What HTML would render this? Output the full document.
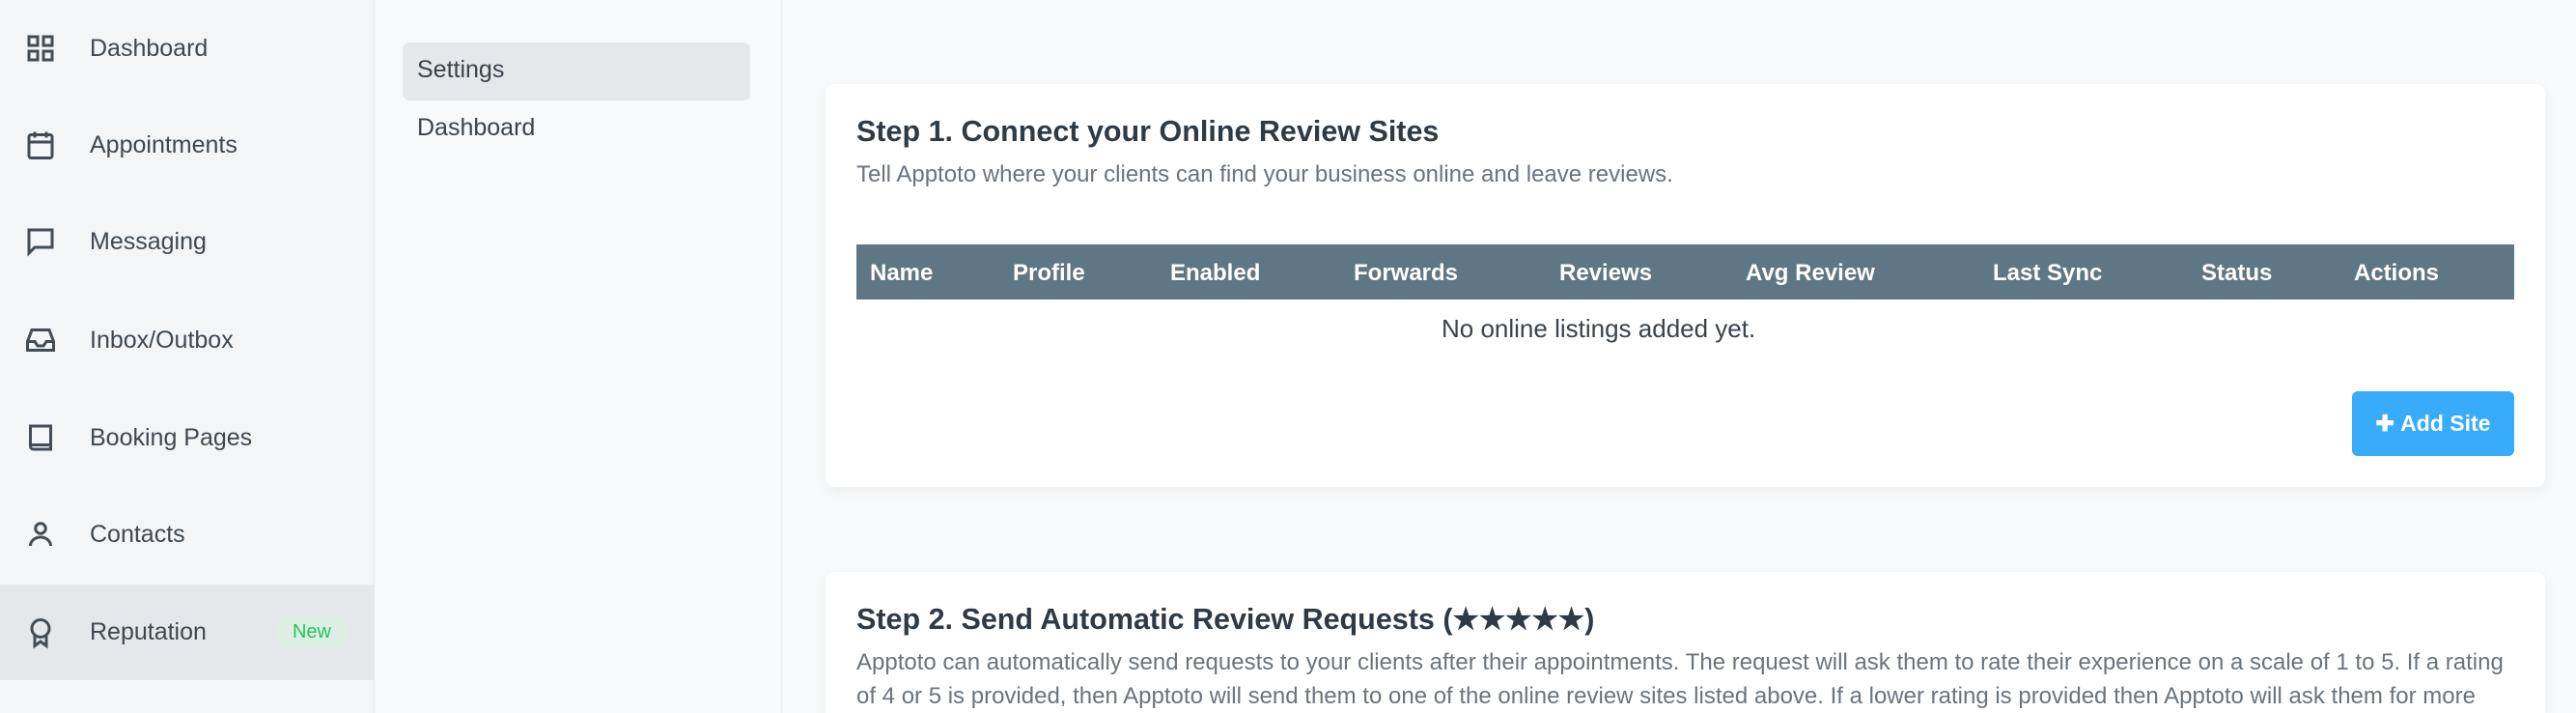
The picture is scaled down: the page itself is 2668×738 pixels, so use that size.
<!DOCTYPE html>
<html><head><meta charset="utf-8"><style>
*{box-sizing:border-box;margin:0;padding:0}
html,body{width:2668px;height:738px;overflow:hidden}
body{background:#f8f9fb;font-family:"Liberation Sans",sans-serif;color:#3d4650;position:relative}
.side{position:absolute;left:0;top:0;width:388px;height:738px;background:#f3f5f7;border-right:1px solid #e8ebee}
.item{position:absolute;left:0;width:388px;height:100px;display:flex;align-items:center}
.item svg{position:absolute;left:24px;width:36px;height:36px}
.item span{position:absolute;left:93px;font-size:25px;color:#3f4852}
.act{background:#e5e8eb}
.badge{position:absolute;left:284px;width:78px;height:35px;border-radius:18px;background:#dfeee5;color:#22c55e;font-size:20px;display:flex;align-items:center;justify-content:center}
.sub{position:absolute;left:389px;top:0;width:421px;height:738px;border-right:1px solid #eceff2}
.set{position:absolute;left:417px;top:44px;width:360px;height:60px;background:#e5e8eb;border-radius:7px}
.card{position:absolute;left:855px;width:1781px;background:#fff;border-radius:10px;box-shadow:0 4px 14px rgba(0,0,0,.05)}
h2{position:absolute;left:32px;font-size:30.5px;font-weight:bold;color:#2f3a44}
.p{position:absolute;left:32px;font-size:24px;color:#6b737c}
.th{position:absolute;left:32px;top:166px;width:1717px;height:57px;background:#5f7685}
.th span{position:absolute;top:16px;color:#fff;font-weight:bold;font-size:24px}
.btn{position:absolute;left:1581px;top:318px;width:168px;height:67px;background:#38acfa;border-radius:6px;color:#fff;font-size:23px;font-weight:bold;display:flex;align-items:center;justify-content:center}
</style></head><body>
<div class="side">
<div class="item" style="top:0"><svg viewBox="0 0 24 24" fill="none" stroke="#444c55" stroke-width="2"><rect x="4" y="4" width="6" height="6"/><rect x="14" y="4" width="6" height="6"/><rect x="4" y="14" width="6" height="6"/><rect x="14" y="14" width="6" height="6"/></svg><span>Dashboard</span></div>
<div class="item" style="top:100px"><svg viewBox="0 0 24 24" fill="none" stroke="#444c55" stroke-width="2"><rect x="4" y="5" width="16" height="16" rx="1.5"/><path d="M4 10h16M8 3v4M16 3v4"/></svg><span>Appointments</span></div>
<div class="item" style="top:200px"><svg viewBox="0 0 24 24" fill="none" stroke="#444c55" stroke-width="2"><path d="M4 4h16v12H8l-4 4z"/></svg><span>Messaging</span></div>
<div class="item" style="top:302px"><svg viewBox="0 0 24 24" fill="none" stroke="#444c55" stroke-width="2"><path d="M3 13l3-8h12l3 8v6H3zM3 13h5l2 3h4l2-3h5"/></svg><span>Inbox/Outbox</span></div>
<div class="item" style="top:403px"><svg viewBox="0 0 24 24" fill="none" stroke="#444c55" stroke-width="2"><path d="M5 4h14v16H7a2 2 0 0 1-2-2zM5 17h14"/></svg><span>Booking Pages</span></div>
<div class="item" style="top:503px"><svg viewBox="0 0 24 24" fill="none" stroke="#444c55" stroke-width="2"><circle cx="12" cy="8" r="3.5"/><path d="M5 20a7 6 0 0 1 14 0"/></svg><span>Contacts</span></div>
<div class="item act" style="top:605px;height:99px"><svg viewBox="0 0 24 24" fill="none" stroke="#444c55" stroke-width="2"><circle cx="12" cy="9" r="6"/><path d="M8 14v7l4-3 4 3v-7"/></svg><span>Reputation</span><div class="badge">New</div></div>
</div>
<div class="sub"></div>
<div class="set"></div>
<div style="position:absolute;left:432px;top:58px;font-size:25px;color:#3a434c">Settings</div>
<div style="position:absolute;left:432px;top:118px;font-size:25px;color:#3a434c">Dashboard</div>
<div class="card" style="top:87px;height:417px">
<h2 style="top:32px">Step 1. Connect your Online Review Sites</h2>
<div class="p" style="top:80px">Tell Apptoto where your clients can find your business online and leave reviews.</div>
<div class="th"><span style="left:14px">Name</span><span style="left:162px">Profile</span><span style="left:325px">Enabled</span><span style="left:515px">Forwards</span><span style="left:728px">Reviews</span><span style="left:921px">Avg Review</span><span style="left:1177px">Last Sync</span><span style="left:1393px">Status</span><span style="left:1551px">Actions</span></div>
<div style="position:absolute;left:638px;top:238px;font-size:26px;color:#3a434c">No online listings added yet.</div>
<div class="btn">✚&nbsp;Add Site</div>
</div>
<div class="card" style="top:592px;height:146px;border-radius:10px 10px 0 0">
<h2 style="top:32px">Step 2. Send Automatic Review Requests (★★★★★)</h2>
<div class="p" style="top:76px;width:1725px;line-height:35px">Apptoto can automatically send requests to your clients after their appointments. The request will ask them to rate their experience on a scale of 1 to 5. If a rating of 4 or 5 is provided, then Apptoto will send them to one of the online review sites listed above. If a lower rating is provided then Apptoto will ask them for more</div>
</div>
</body></html>
